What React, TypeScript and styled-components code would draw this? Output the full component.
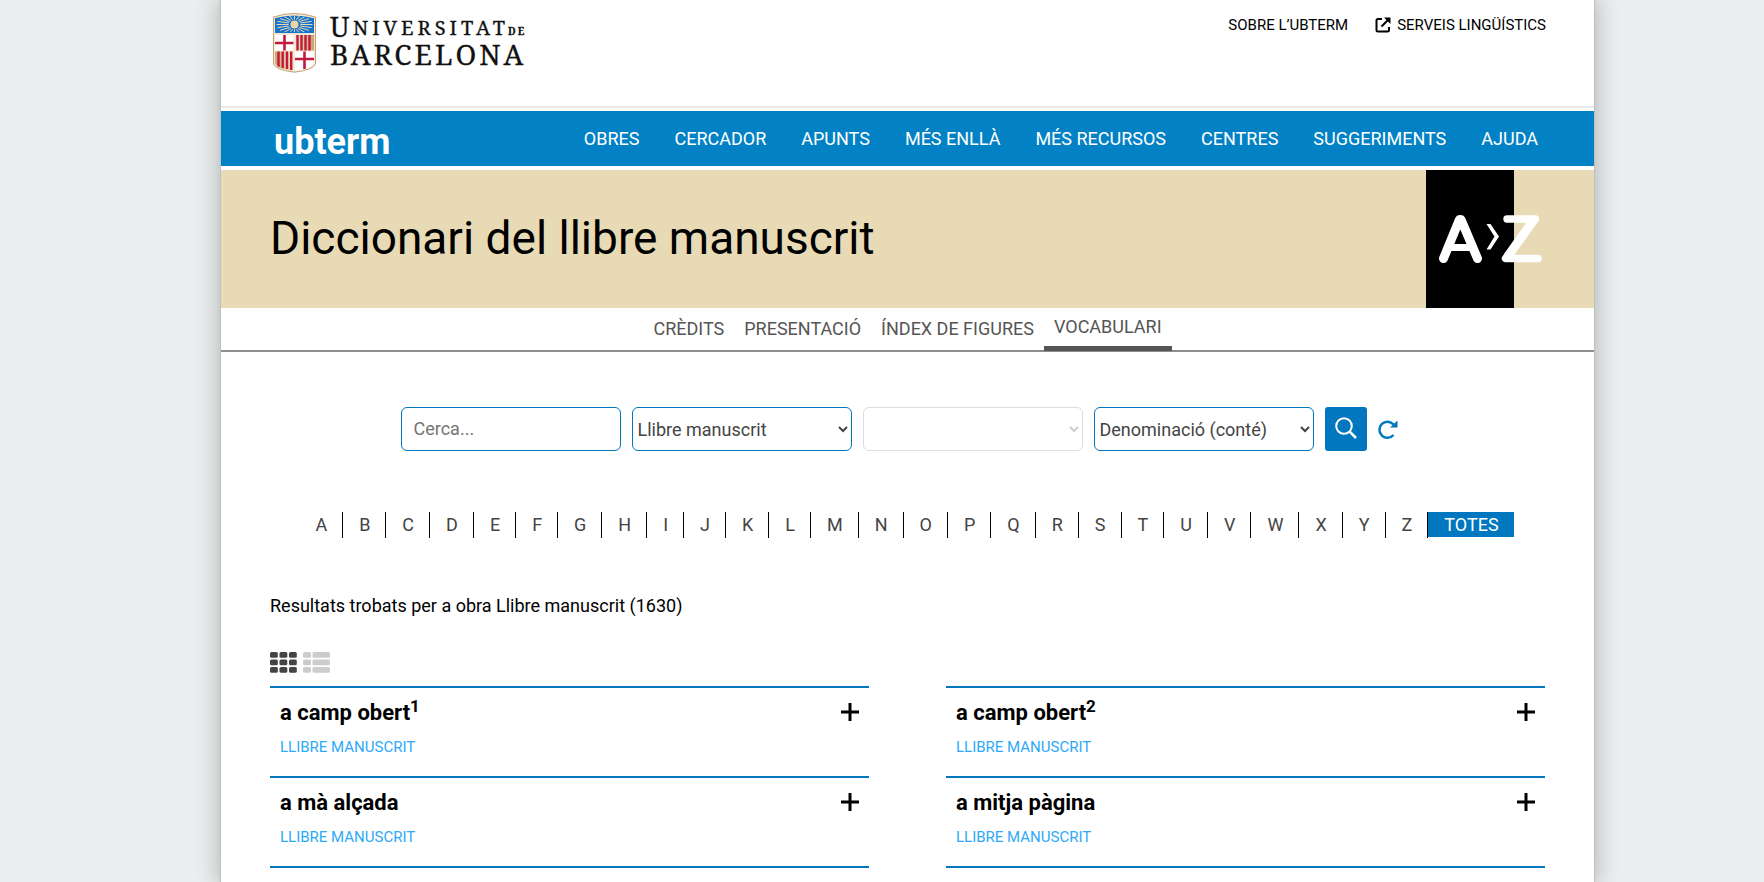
import React from "react";
import styled, { createGlobalStyle } from "styled-components";

const blue = "#0077be";

const GlobalStyle = createGlobalStyle`
  *, *::before, *::after { box-sizing: border-box; }
  body {
    margin: 0;
    background: #eaeeef;
    color: #000;
    font-family: Roboto, "Liberation Sans", sans-serif;
    font-size: 18px;
  }
  a { color: inherit; text-decoration: none; }
  button, input, select { font: inherit; }
  button { cursor: pointer; }
`;

const Page = styled.div`
  margin: 0 170px 0 221px;
  min-height: 100vh;
  background: #fff;
  box-shadow: 0 0 1px 1px #bfc2c3, 0 0 22px 2px rgba(0, 0, 0, 0.25);
`;

const TopBar = styled.header`
  display: flex;
  justify-content: space-between;
  align-items: flex-start;
  height: 108px;
  padding: 12px 48px 0 51px;
  border-bottom: 2px solid #e9ebec;
`;

const BrandLink = styled.a`
  display: block;
  line-height: 0;
`;

const TopLinks = styled.nav`
  display: flex;
  gap: 27px;
  font-size: 15px;
  line-height: 26px;
`;

const TopLink = styled.a`
  display: flex;
  align-items: center;
  gap: 6px;
`;

const MainNav = styled.nav`
  display: flex;
  justify-content: space-between;
  align-items: center;
  height: 55px;
  margin-top: 3px;
  padding: 0 56px 0 53px;
  background: #0282c5;
  color: #fff;
`;

const NavItems = styled.div`
  display: flex;
  gap: 35px;
`;

const Hero = styled.section`
  display: flex;
  justify-content: space-between;
  align-items: center;
  height: 138px;
  margin-top: 4px;
  padding: 0 47px 0 49px;
  background: #e8dab5;
`;

const HeroTitle = styled.h1`
  margin: 0;
  padding-bottom: 2px;
  font-size: 46px;
  font-weight: 400;
  line-height: 56px;
`;

const SubNav = styled.nav`
  display: flex;
  justify-content: center;
  height: 44px;
  border-bottom: 2px solid #8e8e8e;
  color: #555;
`;

const SubLink = styled.a<{ $active?: boolean }>`
  height: 43px;
  padding: ${(p) => (p.$active ? "6px 10px 0" : "8px 10px 0")};
  line-height: 26px;
  border-bottom: ${(p) => (p.$active ? "5px solid #555" : "0")};
`;

const Content = styled.main`
  padding: 55px 49px 0 49px;
`;

const SearchForm = styled.form`
  display: flex;
  justify-content: center;
  align-items: center;
  gap: 11px;
  padding-right: 17px;
`;

const TextField = styled.input`
  width: 220px;
  height: 44px;
  padding: 0 12px 2px;
  border: 1px solid ${blue};
  border-radius: 6px;
  background: #fff;
  color: #444;
  &::placeholder { color: #757575; }
`;

const SelectField = styled.select`
  width: 220px;
  height: 44px;
  padding: 0 1px;
  border: 1px solid ${blue};
  border-radius: 6px;
  background: #fff;
  color: #444;
  &:disabled { border-color: #ddd; color: #ccc; opacity: 1; }
`;

const SearchButton = styled.button`
  display: grid;
  place-items: center;
  width: 42px;
  height: 44px;
  padding: 0 0 2px;
  border: 0;
  border-radius: 3px;
  background: ${blue};
`;

const PlainButton = styled.button`
  display: grid;
  place-items: center;
  padding: 0;
  border: 0;
  background: none;
`;

const Alphabet = styled.nav`
  display: flex;
  justify-content: center;
  margin-top: 61px;
  padding-right: 2px;
  color: #444;
`;

const Letter = styled.a<{ $active?: boolean }>`
  height: ${(p) => (p.$active ? "25px" : "26px")};
  padding: 0 15px 0 16px;
  line-height: 26px;
  border-right: ${(p) => (p.$active ? "0" : "1px solid #000")};
  background: ${(p) => (p.$active ? blue : "transparent")};
  color: ${(p) => (p.$active ? "#fff" : "inherit")};
`;

const Summary = styled.p`
  margin: 54px 0 0;
  line-height: 28px;
`;

const ViewSwitch = styled.div`
  display: flex;
  gap: 6px;
  margin-top: 32px;
`;

const Results = styled.div`
  display: grid;
  grid-template-columns: 1fr 1fr;
  column-gap: 77px;
  margin-top: 13px;
`;

const Entry = styled.article`
  display: flex;
  justify-content: space-between;
  align-items: flex-start;
  min-height: 90px;
  padding: 10px 10px 0;
  border-top: 2px solid ${blue};
  &:nth-last-child(-n + 2) {
    min-height: 92px;
    border-bottom: 2px solid ${blue};
  }
`;

const EntryTitle = styled.h2`
  margin: 0;
  font-size: 22px;
  font-weight: 700;
  line-height: 30px;
  sup { font-size: 17px; line-height: 0; }
`;

const EntrySource = styled.a`
  display: block;
  margin-top: 7px;
  font-size: 15px;
  line-height: 24px;
  color: #2ea9f8;
`;

const ToggleButton = styled(PlainButton)`
  margin-top: 5px;
`;

const Crest = () => {
  const rays = Array.from({ length: 20 }, (_, i) => (i * Math.PI) / 10);
  return (
    <g>
      <defs>
        <clipPath id="shield">
          <path d="M3 5Q22 -1 42 5V50Q40 56 22.500 58Q5 56 3 50Z" />
        </clipPath>
        <clipPath id="sky">
          <path d="M4 5Q22 0 41 5V19H4Z" />
        </clipPath>
        <linearGradient id="gold" x2="1" y2="0">
          <stop offset="0" stopColor="#c9a66b" />
          <stop offset="0.5" stopColor="#f6e9d0" />
          <stop offset="1" stopColor="#c7a36d" />
        </linearGradient>
      </defs>
      <path d="M1.500 4Q22 -3 43.500 4V51Q41 57 22.500 59.200Q4 57 1.500 51Z" fill="#f4e8d2" stroke="#c2a275" />
      <g clipPath="url(#shield)">
        <path d="M3 5Q22 0 42 5V20H3Z" fill="#1673cc" />
        <g clipPath="url(#sky)">
          {rays.map((a) => (
            <line
              key={a}
              x1={22.5 + 6 * Math.cos(a)}
              y1={11.5 + 5 * Math.sin(a)}
              x2={22.5 + 18 * Math.cos(a)}
              y2={11.5 + 10 * Math.sin(a)}
              stroke="#ead9b0"
              strokeWidth="1"
            />
          ))}
        </g>
        <circle cx="22.500" cy="11.500" r="4" fill="#ecd3a2" />
        <path d="M3 22H21.500V37.500H3Z M23 38.500H42V58H23Z" fill="#fff" />
        <path d="M23 22H42V37.500H23Z M3 38.500H21.500V58H3Z" fill="url(#gold)" />
        <path d="M12.500 22V37.500M3 30H21.500M32.500 38.500V56M23 46H42" stroke="#c2183d" strokeWidth="2.600" />
        <path d="M25.500 22V37.500M29.500 22V37.500M33.500 22V37.500M37.500 22V37.500M6.500 38.500V54M10.700 38.500V55M15 38.500V56M19.200 38.500V57" stroke="#c2183d" strokeWidth="2.400" />
      </g>
    </g>
  );
};

const UniversityLogo = () => (
  <svg width="270" height="62" viewBox="0 0 270 62" role="img" aria-label="Universitat de Barcelona">
    <g transform="translate(0 1)">
      <Crest />
    </g>
    <g fill="#111" stroke="#111" strokeWidth="0.300" fontFamily="'Noto Serif', 'Liberation Serif', serif">
      <text x="58" y="25" fontSize="27">U</text>
      <text x="81" y="23" fontSize="20" letterSpacing="4">NIVERSITAT</text>
      <text x="236" y="23" fontSize="10" fontWeight="700" letterSpacing="2">DE</text>
      <text x="58" y="53" fontSize="28" letterSpacing="3">BARCELONA</text>
    </g>
  </svg>
);

const TermLogo = () => (
  <svg width="130" height="46" viewBox="0 0 130 46" role="img" aria-label="ubterm">
    <text x="0" y="38" fill="#fff" fontFamily="Roboto, 'Liberation Sans', sans-serif" fontWeight="700" fontSize="36">ubterm</text>
  </svg>
);

const AzEmblem = () => (
  <svg width="121" height="138" viewBox="0 0 121 138" aria-hidden="true">
    <rect width="88" height="138" fill="#000" />
    <g fill="none" stroke="#fff" strokeLinecap="round" strokeLinejoin="round">
      <path d="M17.500 88.500L33.500 49.500H35L51.500 88.500" strokeWidth="9" />
      <path d="M24 77.500H45" strokeWidth="7" />
      <path d="M81 49H109.500L79.500 88.500H112" strokeWidth="7.400" />
      <path d="M107 51L82 86" strokeWidth="9" />
    </g>
    <path d="M60.500 54H64.500L73 66.500L64.500 79.500H60.500L68.500 66.500Z" fill="#fff" />
  </svg>
);

const ExternalIcon = () => (
  <svg width="16" height="16" viewBox="0 0 16 16" fill="none" stroke="#000" strokeWidth="2" aria-hidden="true">
    <path d="M7 2H3Q1.500 2 1.500 3.500V13Q1.500 14.500 3 14.500H12.500Q14 14.500 14 13V10" />
    <path d="M6.500 9.500L13 3" />
    <path d="M9 0.500H15.500V7Z" fill="#000" stroke="none" />
  </svg>
);

const SearchIcon = () => (
  <svg width="22" height="22" viewBox="0 0 22 22" fill="none" stroke="#fff" strokeWidth="2" aria-hidden="true">
    <circle cx="9" cy="9" r="7.800" />
    <path d="M14.500 14.500L21 21" strokeWidth="2.500" />
  </svg>
);

const ReloadIcon = () => (
  <svg width="20" height="20" viewBox="0 0 20 20" fill="none" stroke={blue} strokeWidth="2.500" aria-hidden="true">
    <path d="M15.500 16A8 8 0 1 1 15.500 5.500" />
    <path d="M19.500 1.500V8.500H12Z" fill={blue} stroke="none" />
  </svg>
);

const cellRows = [0, 7.5, 15];

const GridIcon = () => (
  <svg width="27" height="21" viewBox="0 0 27 21" fill="#444" aria-hidden="true">
    {cellRows.map((y) => [0, 9.5, 19].map((x) => <rect key={`${x}-${y}`} x={x} y={y} width="7.800" height="5.800" rx="1.500" />))}
  </svg>
);

const ListIcon = () => (
  <svg width="27" height="21" viewBox="0 0 27 21" fill="#ccc" aria-hidden="true">
    {cellRows.map((y) => (
      <g key={y}>
        <rect x="0" y={y} width="8" height="5.800" rx="1.500" />
        <rect x="9.500" y={y} width="17.500" height="5.800" rx="1.500" />
      </g>
    ))}
  </svg>
);

const PlusIcon = () => (
  <svg width="18" height="18" viewBox="0 0 18 18" stroke="#000" strokeWidth="3" aria-hidden="true">
    <path d="M9 0V18M0 9H18" />
  </svg>
);

const navItems = ["OBRES", "CERCADOR", "APUNTS", "MÉS ENLLÀ", "MÉS RECURSOS", "CENTRES", "SUGGERIMENTS", "AJUDA"];
const subItems = ["CRÈDITS", "PRESENTACIÓ", "ÍNDEX DE FIGURES", "VOCABULARI"];
const letters = "ABCDEFGHIJKLMNOPQRSTUVWXYZ".split("");
const entries = [
  { term: "a camp obert", index: 1 },
  { term: "a camp obert", index: 2 },
  { term: "a mà alçada" },
  { term: "a mitja pàgina" },
];

export default function App() {
  return (
    <>
      <GlobalStyle />
      <Page>
        <TopBar>
          <BrandLink href="#"><UniversityLogo /></BrandLink>
          <TopLinks>
            <TopLink href="#">SOBRE L’UBTERM</TopLink>
            <TopLink href="#"><ExternalIcon />SERVEIS LINGÜÍSTICS</TopLink>
          </TopLinks>
        </TopBar>
        <MainNav>
          <BrandLink href="#"><TermLogo /></BrandLink>
          <NavItems>
            {navItems.map((item) => <a key={item} href="#">{item}</a>)}
          </NavItems>
        </MainNav>
        <Hero>
          <HeroTitle>Diccionari del llibre manuscrit</HeroTitle>
          <AzEmblem />
        </Hero>
        <SubNav>
          {subItems.map((item) => (
            <SubLink key={item} href="#" $active={item === "VOCABULARI"}>{item}</SubLink>
          ))}
        </SubNav>
        <Content>
          <SearchForm onSubmit={(e) => e.preventDefault()}>
            <TextField type="text" aria-label="Cerca" placeholder="Cerca..." />
            <SelectField aria-label="Obra"><option>Llibre manuscrit</option></SelectField>
            <SelectField aria-label="Àrea" disabled><option></option></SelectField>
            <SelectField aria-label="Camp"><option>Denominació (conté)</option></SelectField>
            <SearchButton type="submit" aria-label="Cerca"><SearchIcon /></SearchButton>
            <PlainButton type="reset" aria-label="Reinicia"><ReloadIcon /></PlainButton>
          </SearchForm>
          <Alphabet>
            {letters.map((l) => <Letter key={l} href="#">{l}</Letter>)}
            <Letter href="#" $active>TOTES</Letter>
          </Alphabet>
          <Summary>Resultats trobats per a obra Llibre manuscrit (1630)</Summary>
          <ViewSwitch>
            <PlainButton type="button" aria-label="Graella"><GridIcon /></PlainButton>
            <PlainButton type="button" aria-label="Llista"><ListIcon /></PlainButton>
          </ViewSwitch>
          <Results>
            {entries.map((e) => (
              <Entry key={e.term + (e.index ?? "")}>
                <div>
                  <EntryTitle>{e.term}{e.index && <sup>{e.index}</sup>}</EntryTitle>
                  <EntrySource href="#">LLIBRE MANUSCRIT</EntrySource>
                </div>
                <ToggleButton type="button" aria-label="Desplega"><PlusIcon /></ToggleButton>
              </Entry>
            ))}
          </Results>
        </Content>
      </Page>
    </>
  );
}
